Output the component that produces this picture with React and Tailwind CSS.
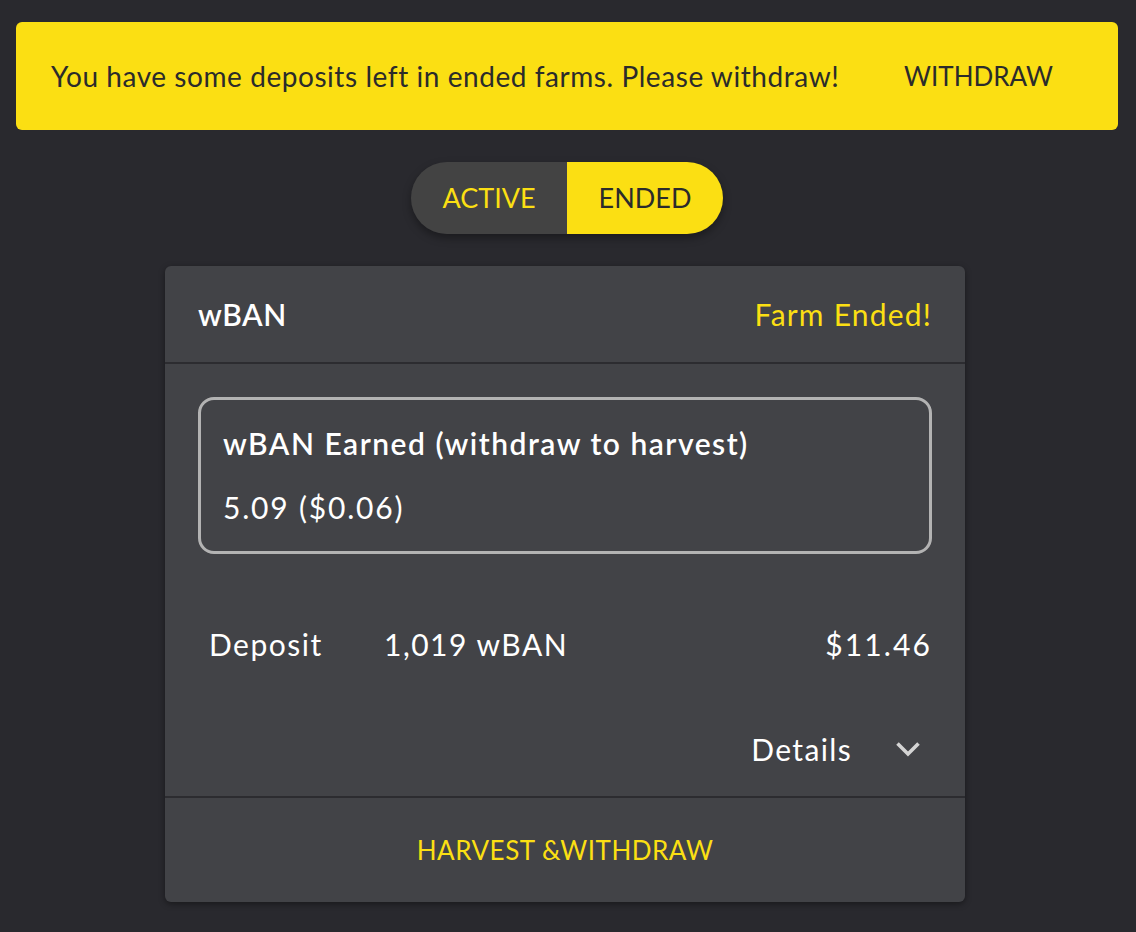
const font = { fontFamily: 'Lato, "Open Sans", sans-serif' };

const App = () => {
  return (
    <div className="min-h-[932px] bg-[#29292e] pl-4 pr-[18px] pt-[22px] text-white" style={font}>
      {/* ─── Warning banner ─── */}
      <div className="flex h-[108px] items-center justify-between rounded-md bg-[#fbdf13] pl-[35px] pr-[65px] text-[#2b2b2b]">
        <span className="text-[28px] tracking-[0.02em]">
          You have some deposits left in ended farms. Please withdraw!
        </span>
        <button className="text-[26px] uppercase">Withdraw</button>
      </div>

      {/* ─── Active / Ended toggle ─── */}
      <div className="mt-8 flex justify-center">
        <div className="flex h-[72px] overflow-hidden rounded-full shadow-[0_4px_8px_rgba(0,0,0,0.35)]">
          <button className="w-[156px] bg-[#434343] text-[27px] uppercase text-[#fbdf13]">Active</button>
          <button className="w-[156px] bg-[#fbdf13] text-[27px] uppercase text-[#2b2b2b]">Ended</button>
        </div>
      </div>

      {/* ─── Farm card ─── */}
      <div className="mt-8 flex justify-center pr-[4px]">
        <div className="w-[800px] overflow-hidden rounded-md bg-[#424347] shadow-[0_2px_6px_rgba(0,0,0,0.4)]">
          <div className="flex h-[98px] items-center justify-between border-b-2 border-[#2c2c30] px-[33px]">
            <span className="text-[30px] font-semibold tracking-[0.02em]">wBAN</span>
            <span className="text-[30px] tracking-[0.04em] text-[#fbdf13]">Farm Ended!</span>
          </div>

          <div className="px-[33px] pt-[33px]">
            <div className="flex h-[157px] flex-col justify-center gap-[19px] rounded-2xl border-[3px] border-[#b3b3b3] px-[22px]">
              <span className="text-[30px] font-semibold tracking-[0.05em]">wBAN Earned (withdraw to harvest)</span>
              <span className="text-[30px] tracking-[0.06em]">5.09 ($0.06)</span>
            </div>

            <div className="mt-[68px] flex items-center pl-[11px] text-[30px] tracking-[0.05em]">
              <span className="w-[175px]">Deposit</span>
              <span>1,019 wBAN</span>
              <span className="ml-auto tracking-[0.07em]">$11.46</span>
            </div>

            <div className="mt-[62px] flex h-[40px] items-center justify-end">
              <span className="text-[30px] tracking-[0.045em]">Details</span>
              <svg className="ml-[43px] mr-[11px]" width="26" height="16" viewBox="0 0 26 16" fill="none">
                <polyline points="2.5,2.5 13,13 23.5,2.5" stroke="#d4d4d4" strokeWidth="3.6" />
              </svg>
            </div>
          </div>

          <div className="mt-[27px] flex h-[106px] items-center justify-center border-t-2 border-[#2c2c30]">
            <span className="text-[26px] uppercase tracking-[0.02em] text-[#fbdf13]">Harvest &amp;Withdraw</span>
          </div>
        </div>
      </div>
    </div>
  );
};

export default App;
